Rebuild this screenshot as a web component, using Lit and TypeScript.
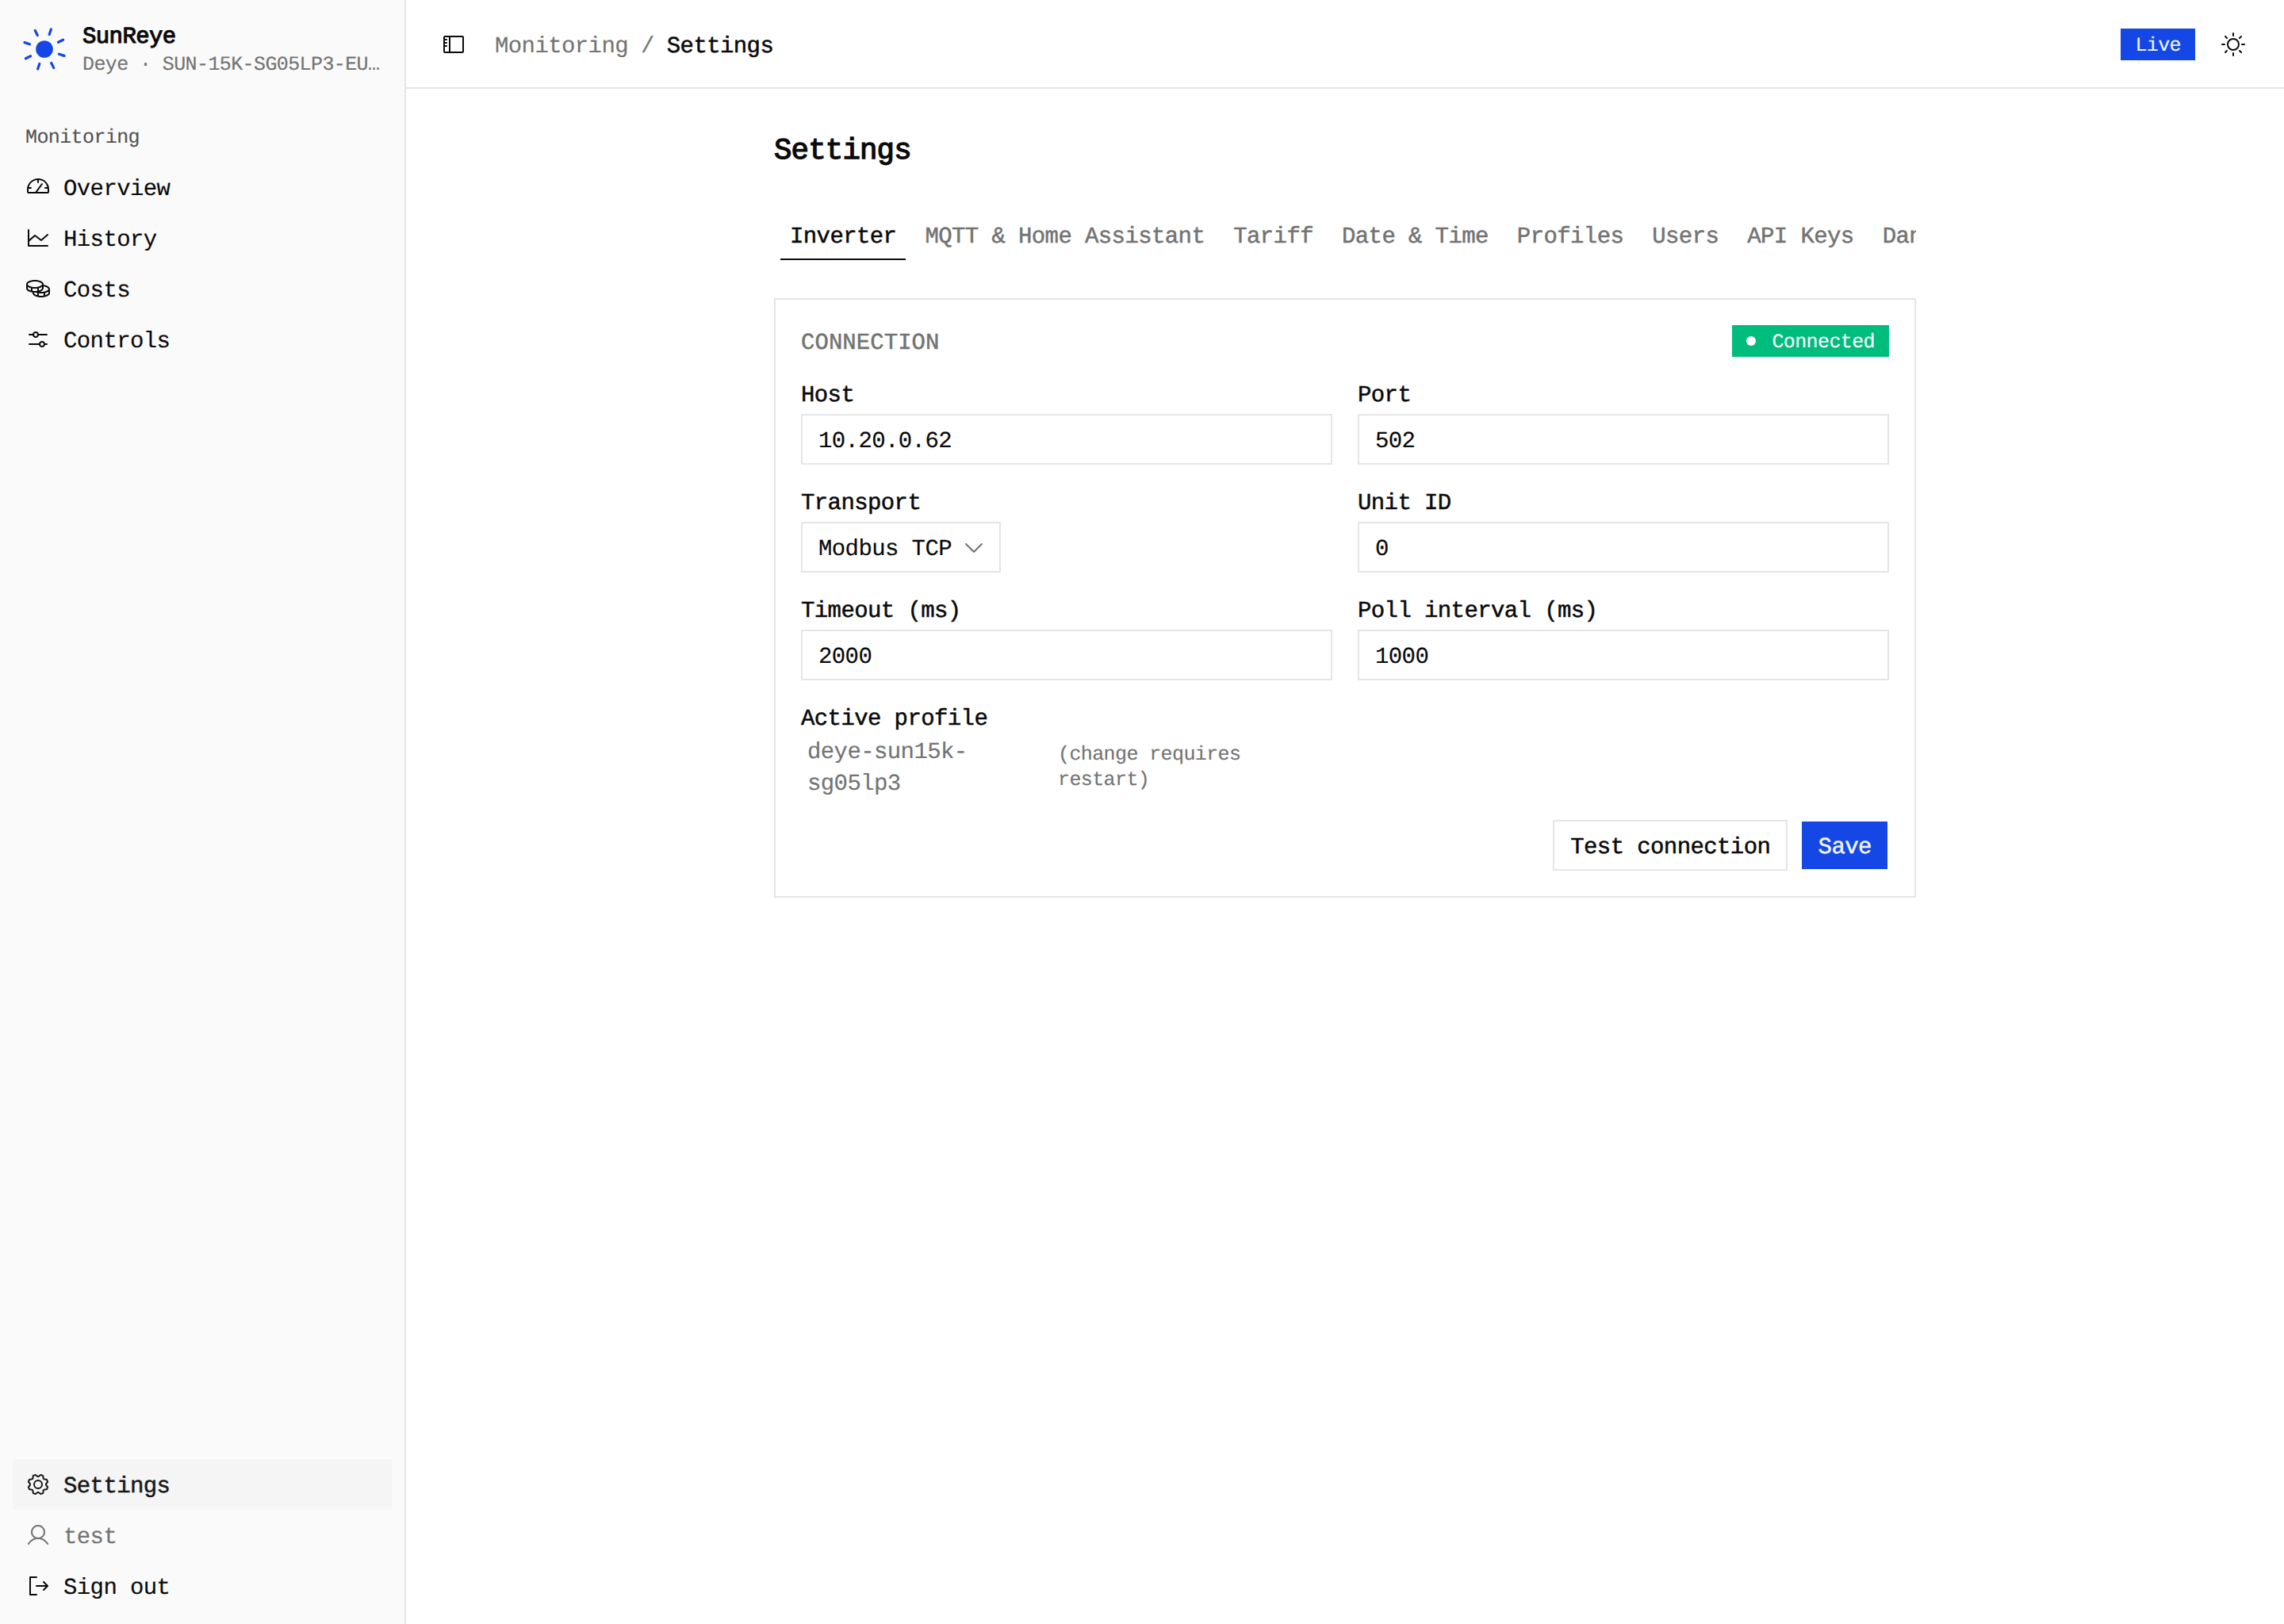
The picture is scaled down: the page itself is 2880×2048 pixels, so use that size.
import { LitElement, html, css, svg } from "lit";
import { customElement, property } from "lit/decorators.js";

const ICONS: Record<string, string> = {
  gauge:
    "M207.06,72.67A111.24,111.24,0,0,0,128,40h-.4C66.07,40.21,16,91,16,153.13V176a16,16,0,0,0,16,16H224a16,16,0,0,0,16-16V152A111.25,111.25,0,0,0,207.06,72.67ZM224,176H119.71l54.76-75.3a8,8,0,0,0-12.94-9.42L99.92,176H32V153.13c0-3.08.15-6.12.43-9.13H56a8,8,0,0,0,0-16H35.27c10.32-38.86,44-68.24,84.73-71.66V80a8,8,0,0,0,16,0V56.33A96.14,96.14,0,0,1,221,128H200a8,8,0,0,0,0,16h23.67c.21,2.65.33,5.31.33,8Z",
  chart:
    "M232,208a8,8,0,0,1-8,8H32a8,8,0,0,1-8-8V48a8,8,0,0,1,16,0v94.37L90.73,98a8,8,0,0,1,10.07-.38l58.81,44.11L218.73,90a8,8,0,1,1,10.54,12l-64,56a8,8,0,0,1-10.07.38L96.39,114.29,40,163.63V200H224A8,8,0,0,1,232,208Z",
  coins:
    "M184,89.57V84c0-25.08-37.83-44-88-44S8,58.92,8,84v40c0,20.89,26.25,37.49,64,42.46V172c0,25.08,37.83,44,88,44s88-18.92,88-44V132C248,111.3,222.58,94.68,184,89.57ZM232,132c0,13.22-30.79,28-72,28-3.73,0-7.43-.13-11.08-.37C170.49,151.77,184,139,184,124V105.74C213.87,110.19,232,122.27,232,132ZM72,150.25V126.46A183.74,183.74,0,0,0,96,128a183.74,183.74,0,0,0,24-1.54v23.79A163,163,0,0,1,96,152,163,163,0,0,1,72,150.25Zm96-40.32V124c0,8.39-12.41,17.4-32,22.87V123.5C148.91,120.37,159.84,115.71,168,109.93ZM96,56c41.21,0,72,14.78,72,28s-30.79,28-72,28S24,97.22,24,84,54.79,56,96,56ZM24,124V109.93c8.16,5.78,19.09,10.44,32,13.57v23.37C36.41,141.4,24,132.39,24,124Zm64,48v-4.17c2.63.1,5.29.17,8,.17,3.88,0,7.67-.13,11.39-.35A121.92,121.92,0,0,0,120,171.41v23.46C100.41,189.4,88,180.39,88,172Zm48,26.25V174.4a179.48,179.48,0,0,0,24,1.6,183.74,183.74,0,0,0,24-1.54v23.79a165.45,165.45,0,0,1-48,0Zm64-3.38V171.5c12.91-3.13,23.84-7.79,32-13.57V172C232,180.39,219.59,189.4,200,194.87Z",
  sliders:
    "M40,88H73a32,32,0,0,0,62,0h81a8,8,0,0,0,0-16H135a32,32,0,0,0-62,0H40a8,8,0,0,0,0,16Zm64-24A16,16,0,1,1,88,80,16,16,0,0,1,104,64ZM216,168H199a32,32,0,0,0-62,0H40a8,8,0,0,0,0,16h97a32,32,0,0,0,62,0h17a8,8,0,0,0,0-16Zm-48,24a16,16,0,1,1,16-16A16,16,0,0,1,168,192Z",
  gear:
    "M128,80a48,48,0,1,0,48,48A48.05,48.05,0,0,0,128,80Zm0,80a32,32,0,1,1,32-32A32,32,0,0,1,128,160Zm88-29.84q.06-2.16,0-4.32l14.92-18.64a8,8,0,0,0,1.48-7.06,107.21,107.21,0,0,0-10.88-26.25,8,8,0,0,0-6-3.93l-23.72-2.64q-1.48-1.56-3-3L186,40.54a8,8,0,0,0-3.94-6,107.71,107.71,0,0,0-26.25-10.87,8,8,0,0,0-7.06,1.49L130.16,40Q128,40,125.84,40L107.2,25.11a8,8,0,0,0-7.06-1.48A107.6,107.6,0,0,0,73.89,34.51a8,8,0,0,0-3.93,6L67.32,64.27q-1.56,1.49-3,3L40.54,70a8,8,0,0,0-6,3.94,107.71,107.71,0,0,0-10.87,26.25,8,8,0,0,0,1.49,7.06L40,125.84Q40,128,40,130.16L25.11,148.8a8,8,0,0,0-1.48,7.06,107.21,107.21,0,0,0,10.88,26.25,8,8,0,0,0,6,3.93l23.72,2.64q1.49,1.56,3,3L70,215.46a8,8,0,0,0,3.94,6,107.71,107.71,0,0,0,26.25,10.87,8,8,0,0,0,7.06-1.49L125.84,216q2.16.06,4.32,0l18.64,14.92a8,8,0,0,0,7.06,1.48,107.21,107.21,0,0,0,26.25-10.88,8,8,0,0,0,3.93-6l2.64-23.72q1.56-1.48,3-3L215.46,186a8,8,0,0,0,6-3.94,107.71,107.71,0,0,0,10.87-26.25,8,8,0,0,0-1.49-7.06Zm-16.1-6.5a73.93,73.93,0,0,1,0,8.68,8,8,0,0,0,1.74,5.48l14.19,17.73a91.57,91.57,0,0,1-6.23,15L187,173.11a8,8,0,0,0-5.1,2.64,74.11,74.11,0,0,1-6.14,6.14,8,8,0,0,0-2.64,5.1l-2.51,22.58a91.32,91.32,0,0,1-15,6.23l-17.74-14.19a8,8,0,0,0-5-1.75h-.48a73.93,73.93,0,0,1-8.68,0,8,8,0,0,0-5.48,1.74L100.45,215.8a91.57,91.57,0,0,1-15-6.23L82.89,187a8,8,0,0,0-2.64-5.1,74.11,74.11,0,0,1-6.14-6.14,8,8,0,0,0-5.1-2.64L46.43,170.6a91.32,91.32,0,0,1-6.23-15l14.19-17.74a8,8,0,0,0,1.74-5.48,73.93,73.93,0,0,1,0-8.68,8,8,0,0,0-1.74-5.48L40.2,100.45a91.57,91.57,0,0,1,6.23-15L69,82.89a8,8,0,0,0,5.1-2.64,74.11,74.11,0,0,1,6.14-6.14A8,8,0,0,0,82.89,69L85.4,46.43a91.32,91.32,0,0,1,15-6.23l17.74,14.19a8,8,0,0,0,5.48,1.74,73.93,73.93,0,0,1,8.68,0,8,8,0,0,0,5.48-1.74L155.55,40.2a91.57,91.57,0,0,1,15,6.23L173.11,69a8,8,0,0,0,2.64,5.1,74.11,74.11,0,0,1,6.14,6.14,8,8,0,0,0,5.1,2.64l22.58,2.51a91.32,91.32,0,0,1,6.23,15l-14.19,17.74A8,8,0,0,0,199.87,123.66Z",
  user:
    "M230.92,212c-15.23-26.33-38.7-45.21-66.09-54.16a72,72,0,1,0-73.66,0C63.78,166.78,40.31,185.66,25.08,212a8,8,0,1,0,13.85,8c18.84-32.56,52.14-52,89.07-52s70.23,19.44,89.07,52a8,8,0,1,0,13.85-8ZM72,96a56,56,0,1,1,56,56A56.06,56.06,0,0,1,72,96Z",
  signout:
    "M120,216a8,8,0,0,1-8,8H48a8,8,0,0,1-8-8V40a8,8,0,0,1,8-8h64a8,8,0,0,1,0,16H56V208h56A8,8,0,0,1,120,216Zm109.66-93.66-40-40a8,8,0,0,0-11.32,11.32L204.69,120H112a8,8,0,0,0,0,16h92.69l-26.35,26.34a8,8,0,0,0,11.32,11.32l40-40A8,8,0,0,0,229.66,122.34Z",
  sidebar:
    "M216,40H40A16,16,0,0,0,24,56V200a16,16,0,0,0,16,16H216a16,16,0,0,0,16-16V56A16,16,0,0,0,216,40ZM40,152H56a8,8,0,0,0,0-16H40V120H56a8,8,0,0,0,0-16H40V88H56a8,8,0,0,0,0-16H40V56H80V200H40Zm176,48H96V56H216V200Z",
  sun:
    "M120,40V16a8,8,0,0,1,16,0V40a8,8,0,0,1-16,0Zm72,88a64,64,0,1,1-64-64A64.07,64.07,0,0,1,192,128Zm-16,0a48,48,0,1,0-48,48A48.05,48.05,0,0,0,176,128ZM58.34,69.66A8,8,0,0,0,69.66,58.34l-16-16A8,8,0,0,0,42.34,53.66Zm0,116.68-16,16a8,8,0,0,0,11.32,11.32l16-16a8,8,0,0,0-11.32-11.32ZM192,72a8,8,0,0,0,5.66-2.34l16-16a8,8,0,0,0-11.32-11.32l-16,16A8,8,0,0,0,192,72Zm5.66,114.34a8,8,0,0,0-11.32,11.32l16,16a8,8,0,0,0,11.32-11.32ZM48,128a8,8,0,0,0-8-8H16a8,8,0,0,0,0,16H40A8,8,0,0,0,48,128Zm80,80a8,8,0,0,0-8,8v24a8,8,0,0,0,16,0V216A8,8,0,0,0,128,208Zm112-88H216a8,8,0,0,0,0,16h24a8,8,0,0,0,0-16Z",
  caret:
    "M213.66,101.66l-80,80a8,8,0,0,1-11.32,0l-80-80A8,8,0,0,1,53.66,90.34L128,164.69l74.34-74.35a8,8,0,0,1,11.32,11.32Z",
};

@customElement("ui-icon")
export class UiIcon extends LitElement {
  @property() name = "";
  static styles = css`
    :host { display: block; width: 32px; height: 32px; flex: none; }
    .glyph { display: block; width: 32px; height: 32px; fill: currentColor; }
  `;
  render() {
    return html`<svg class="glyph" viewBox="0 0 256 256"><path d=${ICONS[this.name] ?? ""}></path></svg>`;
  }
}

@customElement("app-root")
export class AppRoot extends LitElement {
  static styles = css`
    :host {
      display: block;
      height: 100vh;
      font-family: "Liberation Mono", monospace;
      font-size: 29px;
      line-height: 33px;
      letter-spacing: -0.603px;
      text-rendering: geometricPrecision;
      -webkit-text-stroke: 0.15px currentColor;
      color: #0a0a0a;
      background: #fff;
    }
    * { box-sizing: border-box; }
    .app { display: flex; height: 100%; overflow: hidden; }
    .small { font-size: 25px; line-height: 29px; letter-spacing: -0.602px; padding-top: 3px; }
    .text { padding-top: 5px; white-space: pre; }
    .medium { -webkit-text-stroke-width: 0.5px; }

    .sidebar {
      width: 512px; flex: none; display: flex; flex-direction: column;
      background: #fafafa; border-right: 2px solid #e5e5e5;
    }
    .brand { display: flex; gap: 20px; height: 140px; padding: 26px 28px 0; }
    .logo { width: 56px; height: 56px; margin-top: 8px; flex: none; color: #1447e6; }
    .brand-name { line-height: 40px; padding-top: 1px; -webkit-text-stroke-width: 1.1px; }
    .brand-sub { font-size: 25px; letter-spacing: -0.602px; line-height: 30px; color: #737373; white-space: pre; }
    .group { height: 64px; padding: 0 32px; display: flex; align-items: center; color: #525252; }
    .nav { padding: 0 16px; flex: 1; }
    .foot { padding: 0 16px 16px; }
    .item { height: 64px; padding: 0 16px; display: flex; align-items: center; gap: 16px; }
    .item.active { background: #f5f5f5; color: #171717; }
    .item.muted { color: #737373; }

    .main { flex: 1; min-width: 0; display: flex; flex-direction: column; }
    .topbar {
      height: 112px; flex: none; padding: 0 32px 0 44px; display: flex; align-items: center;
      border-bottom: 2px solid #e5e5e5; padding-top: 2px;
    }
    .crumbs { display: flex; gap: 16px; margin-left: 36px; flex: 1; }
    .crumb { color: #737373; }
    .badge { height: 40px; padding: 0 18px; display: flex; align-items: center; }
    .live { background: #1447e6; color: #eff6ff; }
    .theme { width: 64px; height: 64px; margin-left: 16px; display: flex; align-items: center; justify-content: center; }

    .page { width: 1440px; margin: 0 auto; padding-top: 57px; }
    .title {
      margin: 0; font-weight: 400; font-size: 37.4px; line-height: 44px; letter-spacing: -0.844px;
      -webkit-text-stroke-width: 1.3px;
    }
    .tabs { display: flex; gap: 12px; padding: 69px 0 0 8px; overflow: hidden; color: #737373; }
    .tab { padding: 0 12px 11px; border-bottom: 2px solid transparent; white-space: pre; flex: none; }
    .tab.active { color: #0a0a0a; border-color: #0a0a0a; }
    .card { margin-top: 48px; padding: 32px; border: 2px solid #e5e5e5; }
    .card-head { display: flex; justify-content: space-between; align-items: center; height: 40px; margin-bottom: 32px; }
    .section { color: #737373; letter-spacing: 0.05px; padding-top: 5px; }
    .ok { background: #00bc7d; color: #fff; }
    .dot { width: 12px; height: 12px; border-radius: 50%; background: #fff; margin-right: 20px; }
    .grid { display: grid; grid-template-columns: 670px 670px; gap: 32px; }
    .field { display: flex; flex-direction: column; align-items: stretch; }
    .label { height: 28px; margin-bottom: 12px; white-space: pre; }
    .input {
      height: 64px; width: 100%; border: 2px solid #e5e5e5; border-radius: 0; padding: 5px 20px 0;
      font: inherit; letter-spacing: inherit; color: inherit; background: #fff; outline: none; margin: 0;
      -webkit-text-stroke: inherit; text-rendering: inherit;
    }
    .select {
      height: 64px; width: 252px; border: 2px solid #e5e5e5; padding: 0 16px 0 20px;
      display: flex; align-items: center; gap: 12px;
    }
    .caret { color: #737373; }
    .profile { display: flex; gap: 16px; height: 80px; margin-top: -4px; color: #737373; }
    .profile-id { width: 308px; flex: none; padding: 3px 0 0 8px; line-height: 40px; }
    .hint { font-size: 25px; line-height: 32px; letter-spacing: -0.602px; padding-top: 10px; }
    .actions { display: flex; justify-content: flex-end; gap: 16px; margin-top: 28px; }
    .btn { height: 64px; padding: 0 20.2px; border: 2px solid #e5e5e5; display: flex; align-items: center; }
    .btn.primary { background: #1447e6; background-clip: padding-box; border-color: transparent; color: #eff6ff; }
  `;

  private item(icon: string, label: string, cls = "", weight = "") {
    return html`<div class="item ${cls}"><ui-icon name=${icon}></ui-icon><span class="text ${weight}">${label}</span></div>`;
  }

  private field(label: string, value: string) {
    return html`<div class="field">
      <label class="label medium">${label}</label>
      <input class="input" .value=${value} />
    </div>`;
  }

  render() {
    const rays = [0, 45, 90, 135, 180, 225, 270, 315];
    const tabs = ["Inverter", "MQTT & Home Assistant", "Tariff", "Date & Time", "Profiles", "Users", "API Keys", "Danger"];
    return html`
      <div class="app">
        <aside class="sidebar">
          <div class="brand">
            <svg class="logo" viewBox="0 0 56 56">
              <circle cx="28" cy="28" r="10.8" fill="currentColor"></circle>
              ${rays.map(
                (a) => svg`<line x1="28" y1="8.5" x2="28" y2="1.6" stroke="currentColor" stroke-width="3.2" stroke-linecap="round" transform="rotate(${a + 18.5} 28 28)"></line>`
              )}
            </svg>
            <div>
              <div class="brand-name">SunReye</div>
              <div class="brand-sub">Deye · SUN-15K-SG05LP3-EU…</div>
            </div>
          </div>
          <div class="group"><span class="small">Monitoring</span></div>
          <nav class="nav">
            ${this.item("gauge", "Overview")} ${this.item("chart", "History")}
            ${this.item("coins", "Costs")} ${this.item("sliders", "Controls")}
          </nav>
          <div class="foot">
            ${this.item("gear", "Settings", "active", "medium")} ${this.item("user", "test", "muted")}
            ${this.item("signout", "Sign out")}
          </div>
        </aside>
        <main class="main">
          <header class="topbar">
            <ui-icon name="sidebar"></ui-icon>
            <div class="crumbs">
              <span class="text crumb">Monitoring</span>
              <span class="text crumb">/</span>
              <span class="text medium">Settings</span>
            </div>
            <div class="badge live"><span class="small">Live</span></div>
            <div class="theme"><ui-icon name="sun"></ui-icon></div>
          </header>
          <div class="page">
            <h1 class="title">Settings</h1>
            <div class="tabs">
              ${tabs.map((t, i) => html`<span class="tab medium ${i === 0 ? "active" : ""}">${t}</span>`)}
            </div>
            <section class="card">
              <div class="card-head">
                <span class="section medium">CONNECTION</span>
                <div class="badge ok"><span class="dot"></span><span class="small">Connected</span></div>
              </div>
              <div class="grid">
                ${this.field("Host", "10.20.0.62")} ${this.field("Port", "502")}
                <div class="field">
                  <label class="label medium">Transport</label>
                  <div class="select"><span class="text">Modbus TCP</span><ui-icon class="caret" name="caret"></ui-icon></div>
                </div>
                ${this.field("Unit ID", "0")} ${this.field("Timeout (ms)", "2000")}
                ${this.field("Poll interval (ms)", "1000")}
                <div class="field">
                  <label class="label medium">Active profile</label>
                  <div class="profile">
                    <div class="profile-id">deye-sun15k-sg05lp3</div>
                    <div class="hint">(change requires restart)</div>
                  </div>
                </div>
              </div>
              <div class="actions">
                <div class="btn"><span class="text medium">Test connection</span></div>
                <div class="btn primary"><span class="text medium">Save</span></div>
              </div>
            </section>
          </div>
        </main>
      </div>
    `;
  }
}
